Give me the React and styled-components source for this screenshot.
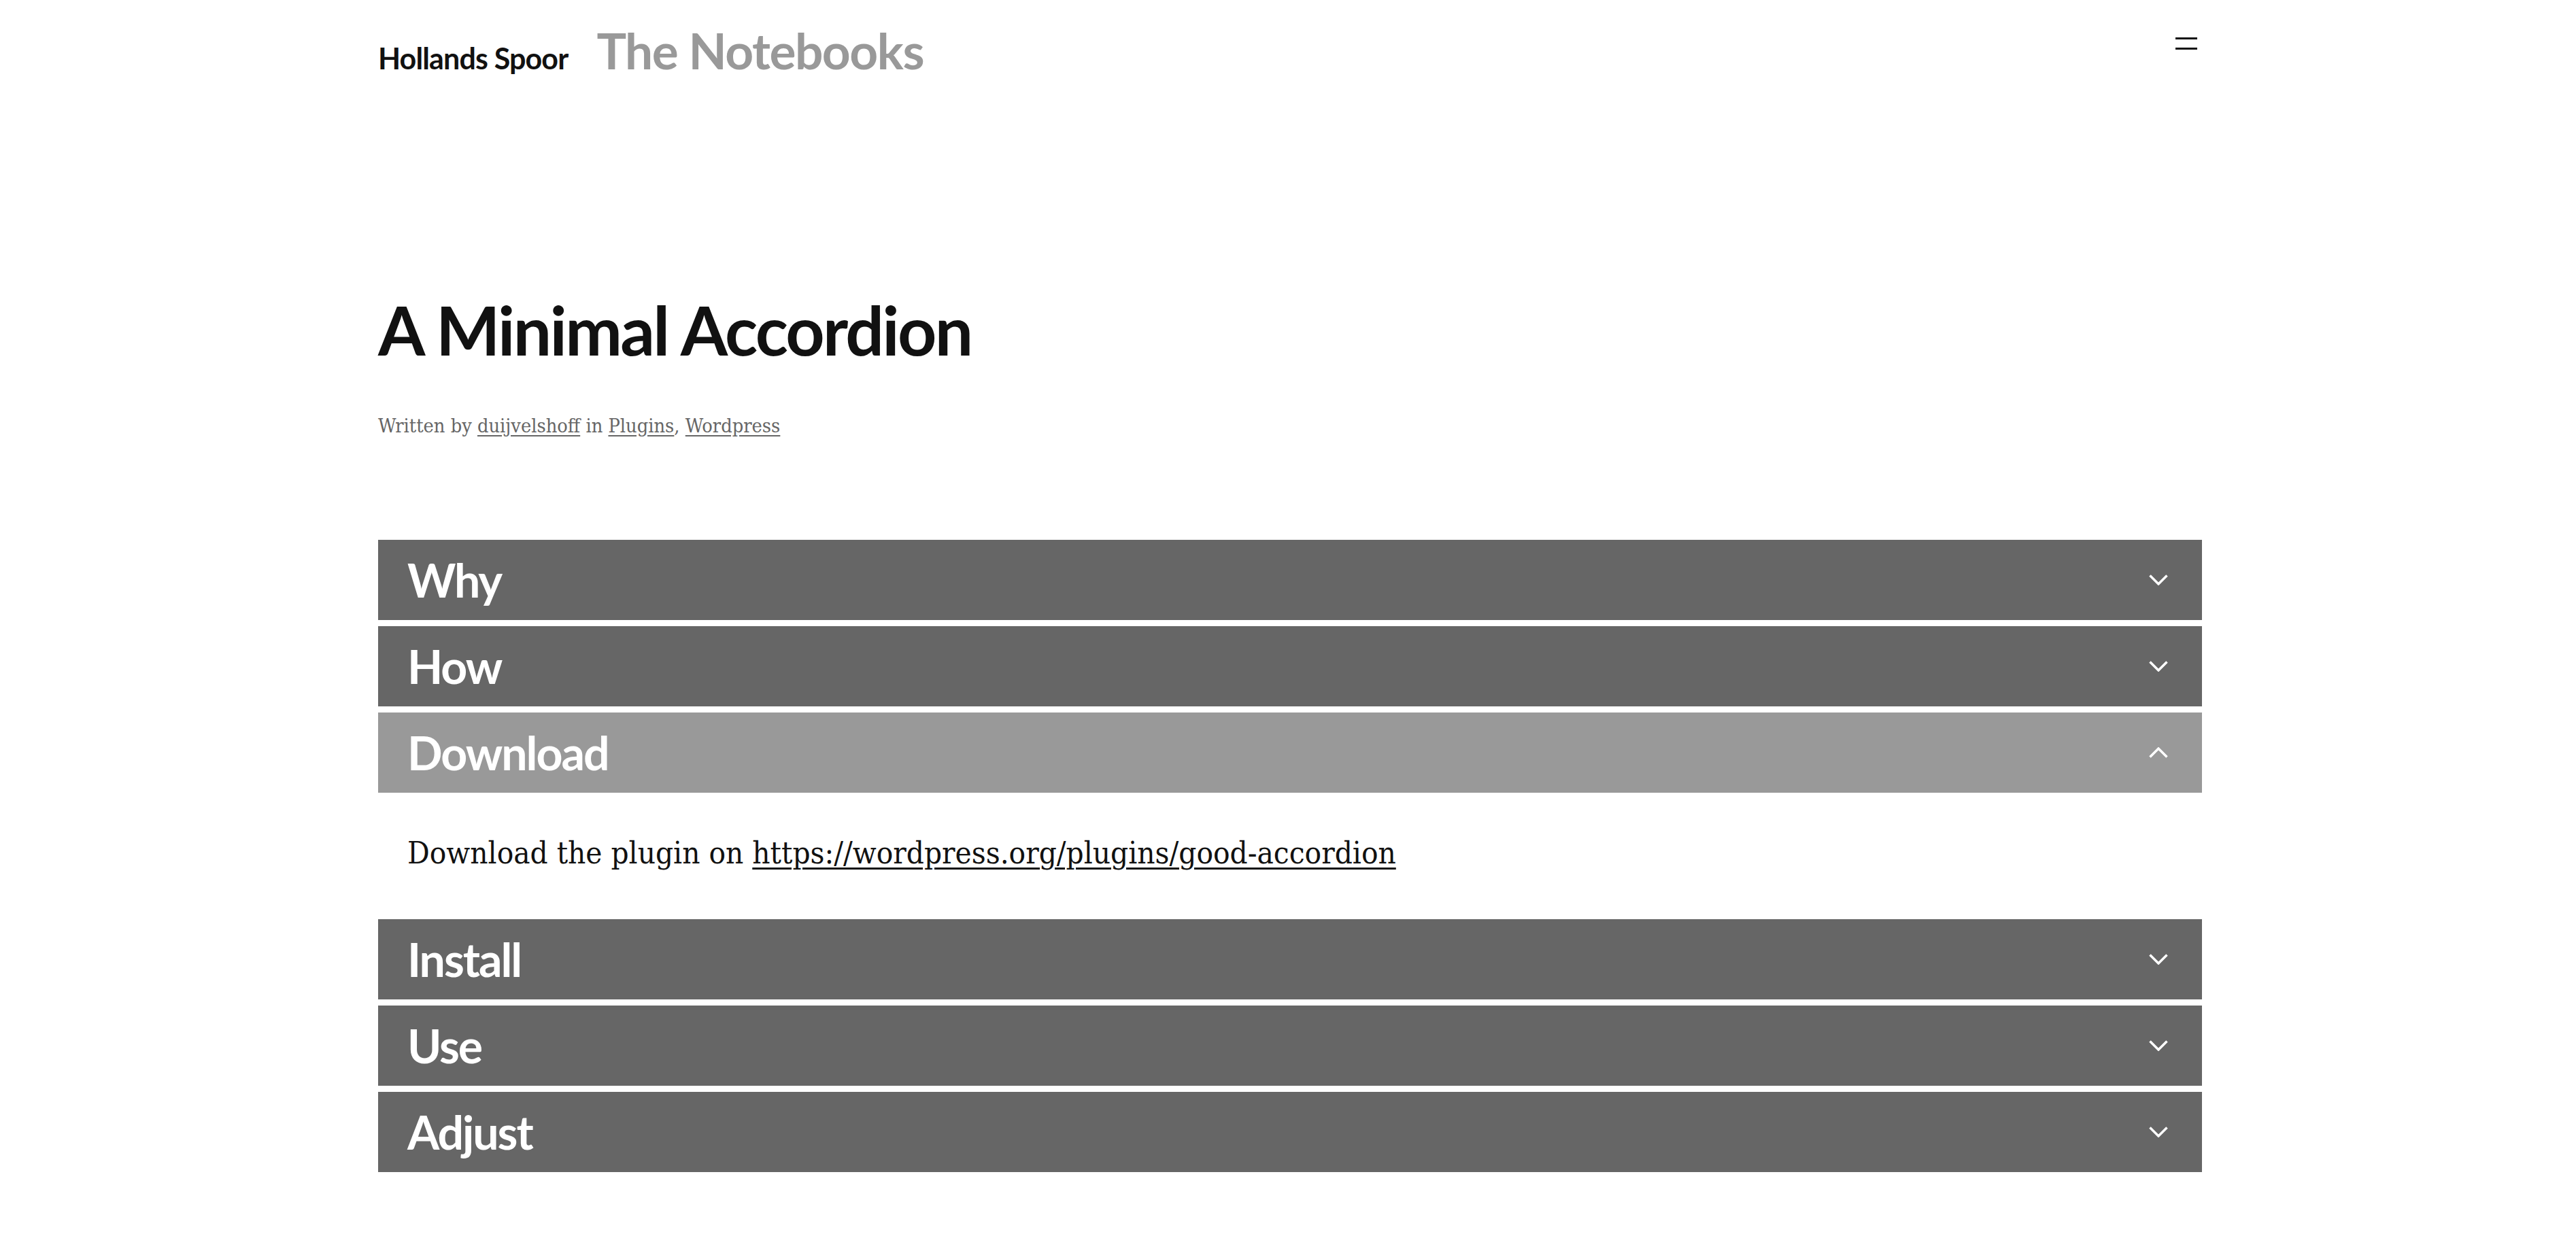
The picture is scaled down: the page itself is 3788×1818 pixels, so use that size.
import React from "react";
import styled, { createGlobalStyle } from "styled-components";

const GlobalStyle = createGlobalStyle`
  body {
    margin: 0;
    padding-left: 6px;
    background: #fff;
    color: #111;
  }
`;

const display = `"Lato", "Liberation Sans", sans-serif`;
const slab = `"DejaVu Serif Condensed", "DejaVu Serif", serif`;

const sections = [
  { title: "Why" },
  { title: "How" },
  {
    title: "Download",
    open: true,
    text: "Download the plugin on ",
    link: "https://wordpress.org/plugins/good-accordion",
  },
  { title: "Install" },
  { title: "Use" },
  { title: "Adjust" },
];

function Chevron({ up }) {
  return (
    <ChevronIcon viewBox="0 0 28 16" up={up ? 1 : 0}>
      <polyline points="1.5,1.5 14,14 26.5,1.5" />
    </ChevronIcon>
  );
}

export default function App() {
  return (
    <>
      <GlobalStyle />
      <Page>
        <Header>
          <Brand>
            <Site>Hollands Spoor</Site>
            <Section>The Notebooks</Section>
          </Brand>
          <MenuButton aria-label="Menu">
            <span />
            <span />
          </MenuButton>
        </Header>

        <Title>A Minimal Accordion</Title>
        <Meta>
          Written by <MetaLink href="#">duijvelshoff</MetaLink> in{" "}
          <MetaLink href="#">Plugins</MetaLink>, <MetaLink href="#">Wordpress</MetaLink>
        </Meta>

        <Accordion>
          {sections.map((s) => (
            <Item key={s.title}>
              <Head open={s.open}>
                <HeadTitle>{s.title}</HeadTitle>
                <Chevron up={s.open} />
              </Head>
              {s.open && (
                <Panel>
                  {s.text}
                  <PanelLink href="#">{s.link}</PanelLink>
                </Panel>
              )}
            </Item>
          ))}
        </Accordion>
      </Page>
    </>
  );
}

const Page = styled.div`
  width: 2682px;
  margin: 0 auto;
  padding-bottom: 90px;
`;

const Header = styled.header`
  display: flex;
  justify-content: space-between;
  align-items: flex-start;
  padding-top: 38px;
`;

const Brand = styled.div`
  display: flex;
  align-items: baseline;
  gap: 42px;
  font-family: ${display};
  font-weight: 700;
  line-height: 1;
`;

const Site = styled.div`
  font-size: 43px;
  letter-spacing: -0.02em;
  color: #111;
`;

const Section = styled.div`
  font-size: 73px;
  letter-spacing: -0.02em;
  color: #999;
`;

const MenuButton = styled.button`
  display: flex;
  flex-direction: column;
  gap: 12px;
  margin: 17px 7px 0 0;
  padding: 0;
  border: 0;
  background: none;
  cursor: pointer;

  span {
    display: block;
    width: 32px;
    height: 3px;
    background: #111;
  }
`;

const Title = styled.h1`
  margin: 323px 0 0;
  font-family: ${display};
  font-weight: 700;
  font-size: 100px;
  line-height: 1;
  letter-spacing: -0.027em;
  color: #111;
`;

const Meta = styled.p`
  margin: 78px 0 0;
  font-family: ${slab};
  font-size: 28.7px;
  line-height: 1;
  color: #666;
`;

const MetaLink = styled.a`
  color: #666;
  text-decoration: underline;
  text-underline-offset: 4px;
`;

const Accordion = styled.div`
  display: flex;
  flex-direction: column;
  gap: 9px;
  margin-top: 153px;
`;

const Item = styled.div`
  display: flex;
  flex-direction: column;
`;

const Head = styled.div`
  display: flex;
  align-items: center;
  justify-content: space-between;
  height: 118px;
  padding: 0 50px 0 43px;
  background: ${(p) => (p.open ? "#999" : "#666")};
  color: #fff;
  cursor: pointer;
`;

const HeadTitle = styled.h2`
  margin: 0;
  font-family: ${display};
  font-weight: 700;
  font-size: 68px;
  line-height: 1;
  letter-spacing: -0.03em;
`;

const ChevronIcon = styled.svg`
  width: 28px;
  height: 16px;
  fill: none;
  stroke: #fff;
  stroke-width: 3.5;
  transform: ${(p) => (p.up ? "rotate(180deg)" : "none")};
`;

const Panel = styled.div`
  padding: 60px 43px;
  font-family: ${slab};
  font-size: 45.4px;
  line-height: 57px;
  color: #111;
`;

const PanelLink = styled.a`
  color: #111;
  text-decoration: underline;
  text-decoration-thickness: 3px;
  text-underline-offset: 6px;
`;
